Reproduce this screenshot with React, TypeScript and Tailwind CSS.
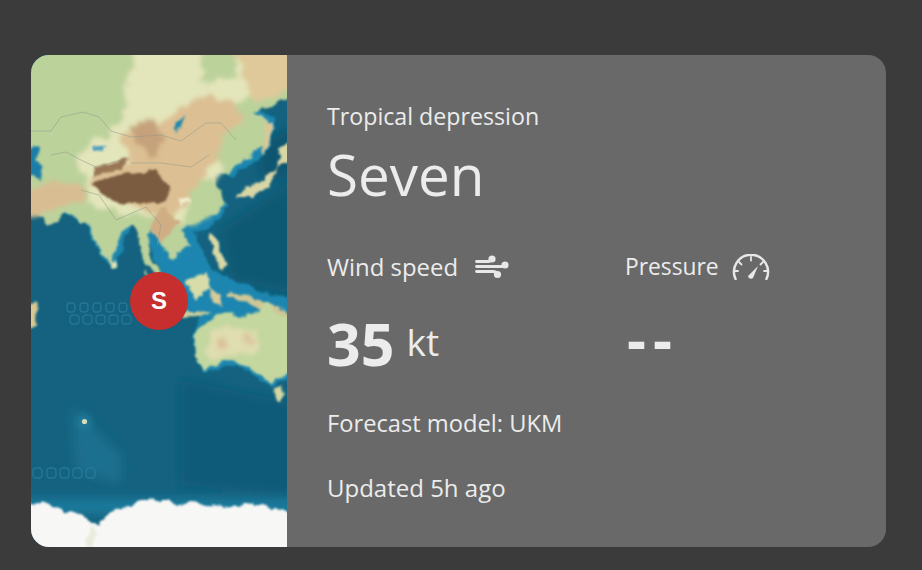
// App.tsx
const font = "font-['Open_Sans','Noto_Sans',sans-serif]";

function MapArt() {
  return (
    <svg viewBox="0 0 256 492" className="block w-[256px] h-[492px]">
      <defs>
        {/* rough coastlines, then soften like an upscaled tile */}
        <filter id="coast" x="-10%" y="-10%" width="120%" height="120%">
          <feTurbulence type="fractalNoise" baseFrequency="0.09" numOctaves="3" seed="4" result="n" />
          <feDisplacementMap in="SourceGraphic" in2="n" scale="9" xChannelSelector="R" yChannelSelector="G" />
          <feGaussianBlur stdDeviation="0.8" />
        </filter>
        <filter id="patch" x="-20%" y="-20%" width="140%" height="140%">
          <feTurbulence type="fractalNoise" baseFrequency="0.07" numOctaves="3" seed="9" result="n" />
          <feDisplacementMap in="SourceGraphic" in2="n" scale="16" xChannelSelector="R" yChannelSelector="G" />
          <feGaussianBlur stdDeviation="2" />
        </filter>
        <filter id="soft" x="-10%" y="-10%" width="120%" height="120%">
          <feGaussianBlur stdDeviation="0.6" />
        </filter>
        <filter id="halo" x="-50%" y="-50%" width="200%" height="200%">
          <feGaussianBlur stdDeviation="3" />
        </filter>
        <filter id="deep" x="-20%" y="-20%" width="140%" height="140%">
          <feGaussianBlur stdDeviation="6" />
        </filter>
      </defs>
      <rect width="256" height="492" fill="#14627f" />
      <g filter="url(#deep)">
        <path d="M190 175 L270 120 L270 240 L200 225Z" fill="#105872" />
        <path d="M225 90 L270 70 L270 120 L232 125Z" fill="#0e5570" />
        <path d="M150 325 L270 350 L270 440 L150 430Z" fill="#115a79" />
        <path d="M-10 445 L270 445 L270 458 L-10 458Z" fill="#1b7fa2" />
        <path d="M40 350 L90 400 L90 430 L45 415Z" fill="#1a6f8f" />
      </g>
      {/* shallow shelf */}
      <g filter="url(#coast)" fill="#1b86b0">
        <path d="M270 32 L224 52 L244 64 L240 94 L210 116 L204 124 L176 110 L180 134 L198 152 L186 166 L164 178 L174 205 L200 232 L150 232 L128 214 L112 178 L102 166 L84 212 L70 204 L56 168 L28 156 L-20 148 L-20 -20 L270 -20Z" />
        <path d="M126 222 L170 214 L206 226 L240 240 L270 244 L270 318 L240 332 L220 318 L204 310 L172 318 L160 280 L172 258 L150 260Z" />
      </g>
      {/* land */}
      <g filter="url(#coast)">
        <path
          d="M270 38 L222 58 L237 65 L234 90 L202 113 L196 120 L179 115 L186 130 L196 150 L182 160 L149 173 L160 190 L152 198 L139 204 L130 190 L122 174 L116 180 L118 200 L134 222 L128 226 L112 204 L106 178 L102 170 L92 176 L79 208 L70 200 L59 170 L34 158 L20 172 L2 156 L-20 150 L-20 -20 L270 -20Z"
          fill="#bcd29b"
        />
        <path d="M246 92 L270 84 L270 98 L246 112 L232 126 L212 135 L206 142 L222 142 L240 130 L248 108Z" fill="#d9d6a6" />
        <path d="M234 66 L242 68 L240 92 L232 100Z" fill="#d9c898" />
        <path d="M179 178 L186 184 L196 210 L190 215 L182 200Z" fill="#d9d9a6" />
        <path d="M154 228 L175 215 L180 232 L165 245 L160 236Z" fill="#d7dca8" />
        <path d="M178 232 L188 240 L194 250 L180 245Z" fill="#d7cb9a" />
        <path d="M112 216 L122 226 L146 252 L152 262 L140 255 L120 236Z" fill="#cfd8a0" />
        <path d="M196 240 L222 252 L270 274 L270 262 L222 243 L200 236Z" fill="#d0c795" />
        <path d="M148 262 L180 260 L172 256 L150 256Z" fill="#c9cf9c" />
        <path d="M80 205 L86 204 L86 212 L81 213Z" fill="#dfe2b4" />
        <path d="M-10 252 L6 246 L4 268 L-10 282Z" fill="#d9c894" />
        <path
          d="M162 278 L178 266 L196 256 L207 262 L219 257 L228 256 L236 247 L245 259 L270 267 L270 313 L239 328 L228 318 L219 313 L202 306 L186 310 L172 315 L165 300Z"
          fill="#c3d79f"
        />
        <path d="M243 333 L253 332 L250 347 L246 346Z" fill="#d3d8a2" />
        <path
          d="M-20 450 L10 448 L16 447 L24 452 L32 457 L50 458 L56 462 L67 470 L74 462 L89 453 L105 448 L119 442 L126 446 L140 446 L152 451 L162 447 L176 451 L199 452 L216 448 L236 452 L270 460 L270 512 L-20 512Z"
          fill="#f7f7f5"
        />
      </g>
      {/* relief colours */}
      <g filter="url(#patch)">
        <path d="M105 -10 L170 -10 L172 28 L205 20 L205 -10 L220 0 L226 40 L195 52 L160 85 L190 110 L178 150 L140 170 L110 162 L60 150 L48 100 L90 66Z" fill="#e3e5ba" />
        <path d="M200 -10 L270 -10 L270 32 L226 50 L215 25Z" fill="#dfc99a" />
        <path d="M90 82 L130 68 L165 42 L205 46 L214 62 L190 90 L180 112 L160 148 L130 165 L100 148 L60 130 L68 108 L100 108Z" fill="#dcc093" />
        <path d="M94 72 L122 66 L135 88 L125 100 L105 88Z" fill="#c6a27b" />
        <path d="M-10 135 L25 126 L50 130 L55 145 L25 150 L8 160 L-10 160Z" fill="#d9bd92" />
        <path d="M165 125 L182 122 L190 150 L170 165 L152 170 L160 145Z" fill="#bcd39b" />
        <path d="M176 280 L200 272 L228 276 L226 296 L200 302 L178 306Z" fill="#e0ddb0" />
        <path d="M186 284 L195 282 L197 291 L186 293Z" fill="#dcc39a" />
        <path d="M210 278 L222 276 L222 286 L210 288Z" fill="#dcc9a0" />
      </g>
      <g filter="url(#coast)">
        <path d="M62 113 L96 104 L92 112 L62 122Z" fill="#987655" />
        <path d="M62 128 L92 118 L125 116 L137 130 L134 148 L115 150 L92 148 L74 142Z" fill="#7c5c3f" />
        <path d="M132 152 L148 168 L130 188 L120 178 L124 160Z" fill="#cfae84" />
        <path d="M146 143 L158 141 L158 148 L148 150Z" fill="#efeac8" />
        <path d="M-10 96 L8 92 L4 104 L12 112 L10 124 L2 122 L-10 118Z" fill="#1b7ea8" />
        <path d="M146 68 L152 62 L150 72 L142 78Z" fill="#1b86ad" />
        <path d="M64 92 L74 90 L70 96 L64 97Z" fill="#4f9ec0" />
        <path d="M60 492 L66 476 L60 470 L54 492Z" fill="#e4e6ce" opacity="0.7" />
      </g>
      <circle cx="53.5" cy="366.5" r="8" fill="#2a88a8" opacity="0.5" filter="url(#halo)" />
      <circle cx="53.5" cy="366.5" r="2.6" fill="#d9dcb8" filter="url(#soft)" />
      {/* borders */}
      <g fill="none" stroke="#8f9a8c" strokeWidth="0.7" opacity="0.75" filter="url(#soft)">
        <path d="M0 76 L20 76 L30 62 L52 57 L68 62 L80 76 L100 82 L130 80 L150 86 L175 68 L190 68 L205 85" />
        <path d="M20 100 L35 97 L50 105 L65 112 L90 105" />
        <path d="M100 108 L130 108 L160 112 L178 100" />
        <path d="M50 135 L68 140 L85 165 L115 152 L130 170 L126 190" />
      </g>
      {/* faint symbols on the tile */}
      <g fill="none" stroke="#2a7f9f" strokeWidth="1.3" opacity="0.75" filter="url(#soft)">
        {[36, 49, 62, 75, 88].map((x) => (
          <rect key={x} x={x} y="248" width="8" height="9" rx="3" />
        ))}
        {[39, 52, 65, 78, 91].map((x) => (
          <rect key={x} x={x} y="260" width="9" height="9" rx="3" />
        ))}
        {[2, 16, 29, 42, 55].map((x) => (
          <rect key={x} x={x} y="413" width="9" height="10" rx="3" />
        ))}
      </g>
    </svg>
  );
}

function WindIcon() {
  return (
    <svg viewBox="0 0 34 24" className="w-[34px] h-[24px] ml-[17px]" fill="none" stroke="#e8e8e8">
      <g strokeWidth="2.8" strokeLinecap="round">
        <path d="M1.5 6.5 H13 Q16 6.5 16.5 4" />
        <path d="M1.5 11.5 H27 Q29 11.5 30 10" />
        <path d="M1.5 16.5 H18 Q21 16.5 22 19" />
      </g>
      <g stroke="none" fill="#e8e8e8">
        <circle cx="17" cy="4" r="3.6" />
        <circle cx="30" cy="10" r="3.6" />
        <circle cx="22.5" cy="19.5" r="3.6" />
      </g>
    </svg>
  );
}

function GaugeIcon() {
  return (
    <svg viewBox="0 0 38 26" className="w-[38px] h-[26px] ml-[13px]" fill="none" stroke="#e8e8e8" strokeWidth="2.4">
      <path d="M3.6 25 A17 17 0 1 1 34.4 25" strokeLinecap="round" />
      <g strokeWidth="1.8" strokeLinecap="round">
        <path d="M2.5 17 H6" />
        <path d="M7 8 L9.5 10.5" />
        <path d="M19 3 V6.5" />
        <path d="M31 8 L28.5 10.5" />
        <path d="M35.5 17 H32" />
      </g>
      <path d="M16 22 L26 12 L21 24 A3 3 0 0 1 16 22Z" fill="#e8e8e8" stroke="none" />
    </svg>
  );
}

export default function App() {
  return (
    <div className={`w-[922px] h-[570px] bg-[#3b3b3b] pt-[55px] pl-[31px] overflow-hidden ${font}`}>
      <div className="flex w-[855px] h-[492px] rounded-[18px] overflow-hidden bg-[#696969] text-[#ececec]">
        <div className="relative w-[256px] shrink-0">
          <MapArt />
          <div className="absolute left-[99px] top-[217px] w-[58px] h-[58px] rounded-full bg-[#c62f2d] flex items-center justify-center text-white text-[24px] font-bold font-['Liberation_Sans',sans-serif]">
            S
          </div>
        </div>
        <div className="flex-1 pl-[40px] pt-[45px]">
          <div className="text-[23.2px] leading-[32px]">Tropical depression</div>
          <div className="text-[56.6px] leading-[64px] mt-[11px]">Seven</div>
          <div className="flex mt-[44px]">
            <div className="w-[298px]">
              <div className="flex items-center h-[32px] text-[23.9px]">
                Wind speed
                <WindIcon />
              </div>
              <div className="flex items-center mt-[28px] h-[64px]">
                <span className="text-[59px] leading-[64px] font-bold">35</span>
                <span className="text-[37px] leading-[64px] ml-[12px] mb-[2px]">kt</span>
              </div>
            </div>
            <div>
              <div className="flex items-center h-[32px] text-[22.8px]">
                Pressure
                <GaugeIcon />
              </div>
              <div className="mt-[28px] pl-[2px] h-[64px] text-[59px] leading-[54px] font-bold tracking-[7px]">--</div>
            </div>
          </div>
          <div className="text-[23.7px] leading-[32px] mt-[32px]">Forecast model: UKM</div>
          <div className="text-[24px] leading-[32px] mt-[33px]">Updated 5h ago</div>
        </div>
      </div>
    </div>
  );
}
